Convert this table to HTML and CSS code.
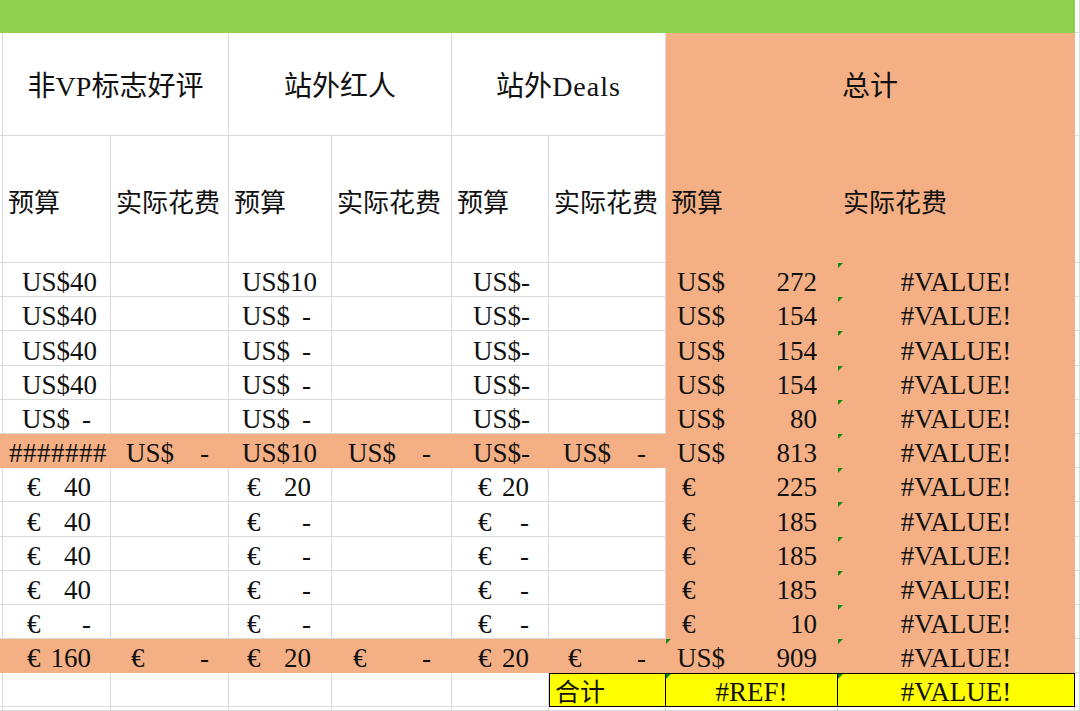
FILE: index.html
```html
<!DOCTYPE html>
<html lang="zh-CN">
<head>
<meta charset="utf-8">
<title>预算表</title>
<link rel="stylesheet" href="styles.css">
</head>
<body>
<div class="sheet">
  <!-- green band -->
  <div class="c green span9"></div><div class="c"></div>

  <!-- header row 1 -->
  <div class="c"></div>
  <div class="c span2 head1">非VP标志好评</div>
  <div class="c span2 head1">站外红人</div>
  <div class="c span2 head1">站外<span class="lat">Deals</span></div>
  <div class="c span2 head1 o">总计</div>
  <div class="c"></div>

  <!-- header row 2 -->
  <div class="c"></div>
  <div class="c head2">预算</div>
  <div class="c head2">实际花费</div>
  <div class="c head2">预算</div>
  <div class="c head2">实际花费</div>
  <div class="c head2">预算</div>
  <div class="c head2">实际花费</div>
  <div class="c head2 o">预算</div>
  <div class="c head2 o tot">实际花费</div>
  <div class="c"></div>

  <!-- r1 -->
  <div class="c"></div>
  <div class="c acc pb"><span>US$</span><span>40</span></div>
  <div class="c"></div>
  <div class="c acc pd"><span>US$</span><span>10</span></div>
  <div class="c"></div>
  <div class="c acc pf"><span>US$</span><span>-</span></div>
  <div class="c"></div>
  <div class="c o acc ph"><span>US$</span><span>272</span></div>
  <div class="c o ctr tri">#VALUE!</div>
  <div class="c"></div>

  <!-- r2 -->
  <div class="c"></div>
  <div class="c acc pb"><span>US$</span><span>40</span></div>
  <div class="c"></div>
  <div class="c acc pd"><span>US$</span><span>-</span></div>
  <div class="c"></div>
  <div class="c acc pf"><span>US$</span><span>-</span></div>
  <div class="c"></div>
  <div class="c o acc ph"><span>US$</span><span>154</span></div>
  <div class="c o ctr tri">#VALUE!</div>
  <div class="c"></div>

  <!-- r3 -->
  <div class="c"></div>
  <div class="c acc pb"><span>US$</span><span>40</span></div>
  <div class="c"></div>
  <div class="c acc pd"><span>US$</span><span>-</span></div>
  <div class="c"></div>
  <div class="c acc pf"><span>US$</span><span>-</span></div>
  <div class="c"></div>
  <div class="c o acc ph"><span>US$</span><span>154</span></div>
  <div class="c o ctr tri">#VALUE!</div>
  <div class="c"></div>

  <!-- r4 -->
  <div class="c"></div>
  <div class="c acc pb"><span>US$</span><span>40</span></div>
  <div class="c"></div>
  <div class="c acc pd"><span>US$</span><span>-</span></div>
  <div class="c"></div>
  <div class="c acc pf"><span>US$</span><span>-</span></div>
  <div class="c"></div>
  <div class="c o acc ph"><span>US$</span><span>154</span></div>
  <div class="c o ctr tri">#VALUE!</div>
  <div class="c"></div>

  <!-- r5 -->
  <div class="c"></div>
  <div class="c acc pb"><span>US$</span><span>-</span></div>
  <div class="c"></div>
  <div class="c acc pd"><span>US$</span><span>-</span></div>
  <div class="c"></div>
  <div class="c acc pf"><span>US$</span><span>-</span></div>
  <div class="c"></div>
  <div class="c o acc ph"><span>US$</span><span>80</span></div>
  <div class="c o ctr tri">#VALUE!</div>
  <div class="c"></div>

  <!-- r6 subtotal -->
  <div class="c o"></div>
  <div class="c o fill">#######</div>
  <div class="c o acc pc"><span>US$</span><span>-</span></div>
  <div class="c o acc pd"><span>US$</span><span>10</span></div>
  <div class="c o acc pe"><span>US$</span><span>-</span></div>
  <div class="c o acc pf"><span>US$</span><span>-</span></div>
  <div class="c o acc pg"><span>US$</span><span>-</span></div>
  <div class="c o acc ph"><span>US$</span><span>813</span></div>
  <div class="c o ctr tri">#VALUE!</div>
  <div class="c"></div>

  <!-- r7 -->
  <div class="c"></div>
  <div class="c acc pb"><span class="eur">€</span><span>40</span></div>
  <div class="c"></div>
  <div class="c acc pd"><span class="eur">€</span><span>20</span></div>
  <div class="c"></div>
  <div class="c acc pf"><span class="eur">€</span><span>20</span></div>
  <div class="c"></div>
  <div class="c o acc ph"><span class="eur">€</span><span>225</span></div>
  <div class="c o ctr tri">#VALUE!</div>
  <div class="c"></div>

  <!-- r8 -->
  <div class="c"></div>
  <div class="c acc pb"><span class="eur">€</span><span>40</span></div>
  <div class="c"></div>
  <div class="c acc pd"><span class="eur">€</span><span>-</span></div>
  <div class="c"></div>
  <div class="c acc pf"><span class="eur">€</span><span>-</span></div>
  <div class="c"></div>
  <div class="c o acc ph"><span class="eur">€</span><span>185</span></div>
  <div class="c o ctr tri">#VALUE!</div>
  <div class="c"></div>

  <!-- r9 -->
  <div class="c"></div>
  <div class="c acc pb"><span class="eur">€</span><span>40</span></div>
  <div class="c"></div>
  <div class="c acc pd"><span class="eur">€</span><span>-</span></div>
  <div class="c"></div>
  <div class="c acc pf"><span class="eur">€</span><span>-</span></div>
  <div class="c"></div>
  <div class="c o acc ph"><span class="eur">€</span><span>185</span></div>
  <div class="c o ctr tri">#VALUE!</div>
  <div class="c"></div>

  <!-- r10 -->
  <div class="c"></div>
  <div class="c acc pb"><span class="eur">€</span><span>40</span></div>
  <div class="c"></div>
  <div class="c acc pd"><span class="eur">€</span><span>-</span></div>
  <div class="c"></div>
  <div class="c acc pf"><span class="eur">€</span><span>-</span></div>
  <div class="c"></div>
  <div class="c o acc ph"><span class="eur">€</span><span>185</span></div>
  <div class="c o ctr tri">#VALUE!</div>
  <div class="c"></div>

  <!-- r11 -->
  <div class="c"></div>
  <div class="c acc pb"><span class="eur">€</span><span>-</span></div>
  <div class="c"></div>
  <div class="c acc pd"><span class="eur">€</span><span>-</span></div>
  <div class="c"></div>
  <div class="c acc pf"><span class="eur">€</span><span>-</span></div>
  <div class="c"></div>
  <div class="c o acc ph"><span class="eur">€</span><span>10</span></div>
  <div class="c o ctr tri">#VALUE!</div>
  <div class="c"></div>

  <!-- r12 subtotal -->
  <div class="c o"></div>
  <div class="c o acc pb"><span class="eur">€</span><span>160</span></div>
  <div class="c o acc pc"><span class="eur">€</span><span>-</span></div>
  <div class="c o acc pd"><span class="eur">€</span><span>20</span></div>
  <div class="c o acc pe"><span class="eur">€</span><span>-</span></div>
  <div class="c o acc pf"><span class="eur">€</span><span>20</span></div>
  <div class="c o acc pg"><span class="eur">€</span><span>-</span></div>
  <div class="c o acc ph tri"><span>US$</span><span>909</span></div>
  <div class="c o ctr tri">#VALUE!</div>
  <div class="c"></div>

  <!-- r13 grand total -->
  <div class="c"></div>
  <div class="c"></div>
  <div class="c"></div>
  <div class="c"></div>
  <div class="c"></div>
  <div class="c"></div>
  <div class="c y yfirst label">合计</div>
  <div class="c y ctr tri">#REF!</div>
  <div class="c y ctr tri">#VALUE!</div>
  <div class="c"></div>

  <!-- partial row -->
  <div class="c"></div><div class="c"></div><div class="c"></div><div class="c"></div><div class="c"></div>
  <div class="c"></div><div class="c"></div><div class="c"></div><div class="c"></div><div class="c"></div>
</div>
</body>
</html>
```

FILE: styles.css
```css
html, body {
  margin: 0;
  padding: 0;
  background: #ffffff;
  overflow: hidden;
}

.sheet {
  width: 1080px;
  height: 711px;
  display: grid;
  grid-template-columns: 3px 108px 118px 103px 120px 97px 117px 172px 237px 5px;
  grid-template-rows: 33px 103px 127px 34px 34px 35px 34px 34px 34px 34px 35px 34px 34px 34px 34px 34px 4px;
  font-family: "Liberation Serif", "Noto Sans CJK SC", serif;
  font-size: 27px;
  color: #111111;
  overflow: hidden;
}

.c {
  box-sizing: border-box;
  position: relative;
  border-right: 1px solid #dadada;
  border-bottom: 1px solid #dadada;
  display: flex;
  align-items: flex-end;
  white-space: nowrap;
  overflow: hidden;
  line-height: 27px;
  min-width: 0;
}

.span2 { grid-column: span 2; }
.span9 { grid-column: span 9; }

.green {
  background: #92d050;
  border-color: #92d050;
}

.o {
  background: #f4b084;
  border-color: #f4b084;
}

.head1 {
  align-items: center;
  justify-content: center;
  font-size: 28px;
  line-height: 34px;
  padding-top: 5px;
}

.lat {
  letter-spacing: 1px;
}

.head2 {
  align-items: center;
  padding-left: 5px;
  padding-top: 4px;
  font-family: "Noto Sans CJK SC", sans-serif;
  font-size: 26px;
  line-height: 34px;
}

.acc {
  justify-content: space-between;
}

.eur { margin-left: 5px; }

.pb { padding: 0 19px 0 19px; }
.pc { padding: 0 19px 0 15px; }
.pd { padding: 0 20px 0 13px; }
.pe { padding: 0 20px 0 16px; }
.pf { padding: 0 19px 0 21px; }
.pg { padding: 0 19px 0 14px; }
.ph { padding: 0 20px 0 11px; }

.fill {
  padding-left: 6px;
  letter-spacing: 0.5px;
}

.ctr {
  justify-content: center;
}

.tri::before {
  content: "";
  position: absolute;
  left: 0;
  top: 0;
  width: 0;
  height: 0;
  border-top: 5px solid #138a13;
  border-right: 5px solid transparent;
}

.y {
  background: #ffff00;
  border-top: 1px solid #000000;
  border-bottom: 1px solid #000000;
  border-right: 1px solid #000000;
}

.yfirst {
  border-left: 1px solid #000000;
}

.label {
  align-items: center;
  overflow: visible;
  padding-left: 5px;
  line-height: 30px;
  font-family: "Noto Sans CJK SC", sans-serif;
  font-size: 25px;
}
```
